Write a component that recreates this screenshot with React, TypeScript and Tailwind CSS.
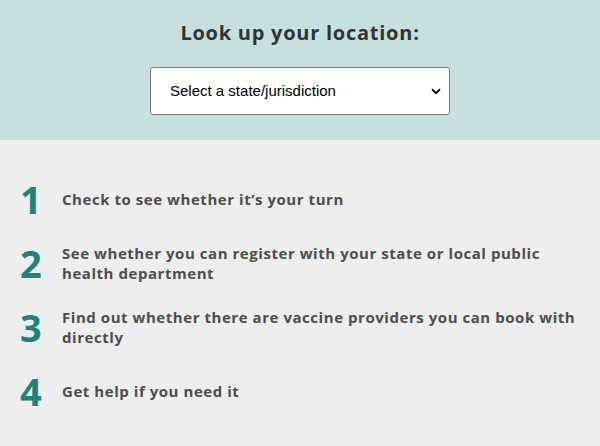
export default function App() {
  const steps = [
    "Check to see whether it’s your turn",
    "See whether you can register with your state or local public health department",
    "Find out whether there are vaccine providers you can book with directly",
    "Get help if you need it",
  ];

  return (
    <div className="w-[600px] h-[446px] bg-[#eeeeee] font-['Open_Sans',sans-serif]">
      <div className="bg-[#c6e0df] h-[140px] pt-[19px] flex flex-col items-center">
        <h1 className="text-[20px] leading-[28px] font-bold text-[#333333] tracking-[0.75px]">
          Look up your location:
        </h1>
        <div className="mt-[20px] w-[300px] h-[48px] bg-white border border-[#7a7a7a] rounded-[3px] flex items-center justify-between pl-[19px] pr-[8px]">
          <span className="font-['Liberation_Sans',Arial,sans-serif] text-[15px] text-black">
            Select a state/jurisdiction
          </span>
          <svg width="10" height="7" viewBox="0 0 10 7" fill="none">
            <path d="M1 1.2l4 4 4-4" stroke="#111" strokeWidth="2" />
          </svg>
        </div>
      </div>

      <ol className="pt-[39px] pl-[20px] pr-[22px] flex flex-col gap-[24px]">
        {steps.map((s, i) => (
          <li key={i} className="flex items-center">
            <span className="w-[42px] shrink-0 text-[38px] leading-[40px] font-bold text-[#21827a]">
              {i + 1}
            </span>
            <span className="text-[15px] leading-[20px] font-bold text-[#4d4d4d] tracking-[0.55px]">
              {s}
            </span>
          </li>
        ))}
      </ol>
    </div>
  );
}
